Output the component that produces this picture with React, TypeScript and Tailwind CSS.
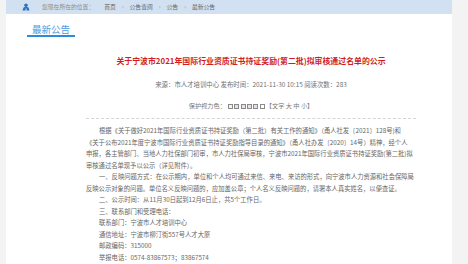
const FONT = { fontFamily: '"Noto Sans CJK SC", "Noto Sans", sans-serif' };

const swatches = ["#fbf7c8", "#cfe6fb", "#f6dede", "#e4e4e4", "#e9dcf6", "#ffffff"];

const body: { text: string; indent?: boolean }[] = [
  { text: "根据《关于做好2021年国际行业资质证书持证奖励（第二批）有关工作的通知》（甬人社发〔2021〕128号)和", indent: true },
  { text: "《关于公布2021年度宁波市国际行业资质证书持证奖励指导目录的通知》（甬人社办发〔2020〕14号）精神，经个人" },
  { text: "申报，各主管部门、当地人力社保部门初审，市人力社保局审核，宁波市2021年国际行业资质证书持证奖励(第二批)拟" },
  { text: "审核通过名单现予以公示（详见附件）。" },
  { text: "一、反映问题方式：在公示期内，单位和个人均可通过来信、来电、来访的形式，向宁波市人力资源和社会保障局", indent: true },
  { text: "反映公示对象的问题。单位名义反映问题的，应加盖公章；个人名义反映问题的，请署本人真实姓名，以便查证。" },
  { text: "二、公示时间：从11月30日起到12月6日止，共5个工作日。", indent: true },
  { text: "三、联系部门和受理电话：", indent: true },
  { text: "联系部门：宁波市人才培训中心", indent: true },
  { text: "通信地址：宁波市柳汀街557号人才大厦", indent: true },
  { text: "邮政编码：315000", indent: true },
  { text: "举报电话：0574-83867573；83867574", indent: true },
];

function Crumb({ children }: { children: React.ReactNode }) {
  return <span className="text-[#666]">{children}</span>;
}

function Sep() {
  return <span className="mx-[6px] text-[#999]">›</span>;
}

export default function App() {
  return (
    <div className="h-[264px] w-[468px] overflow-hidden bg-[#f3f3f3]" style={FONT}>
      <div className="ml-[6px] h-full w-[446px] bg-white">
        {/* 位置栏 */}
        <div className="flex h-[14px] items-center bg-[#d2e1f1] pl-[16px] text-[5.8px] leading-none">
          <svg width="8" height="8" viewBox="0 0 16 16" className="mr-[12px]">
            <circle cx="8" cy="4.5" r="3.5" fill="#2c6fbf" />
            <path d="M1 15 L3 9 Q8 6 13 9 L15 15 Z" fill="#2c6fbf" />
            <path d="M8 9 L9.3 15 L6.7 15 Z" fill="#fff" />
          </svg>
          <span className="text-[#8a8a8a]">您现在所在的位置：</span>
          <span className="ml-[10px]" />
          <Crumb>首页</Crumb>
          <Sep />
          <Crumb>公告查阅</Crumb>
          <Sep />
          <Crumb>公告</Crumb>
          <Sep />
          <Crumb>最新公告</Crumb>
        </div>

        {/* 栏目标题 */}
        <div className="ml-[21px] mt-[5px] inline-block border-b-2 border-[#2b8ad9] px-[5px] text-[9.5px] leading-[12px] text-[#4b9de0]">
          最新公告
        </div>

        {/* 正文区 */}
        <div className="ml-[80px] w-[330px]">
          <h1 className="mt-[17px] whitespace-nowrap text-center text-[7.9px] font-bold leading-[12px] text-[#cf1f25]">
            关于宁波市2021年国际行业资质证书持证奖励(第二批)拟审核通过名单的公示
          </h1>
          <div className="mt-[13px] text-center text-[6.4px] leading-[10px] text-[#707070]">
            来源：市人才培训中心 发布时间：2021-11-30 10:15 阅读次数：283
          </div>
          <div className="mt-[11px] flex items-center justify-center text-[6.2px] leading-[10px] text-[#777]">
            <span>保护视力色：</span>
            <span className="ml-[2px] flex gap-[1.4px]">
              {swatches.map((c) => (
                <span key={c} className="h-[5px] w-[5px] border border-[#8a8a8a]" style={{ background: c }} />
              ))}
            </span>
            <span className="ml-[1px]">【文字 大 中 小】</span>
          </div>
          <div className="mt-[7px] border-t border-dashed border-[#d4d4d4]" />
          <div className="mt-[6px] text-[6.3px] leading-[11.5px] text-[#666]">
            {body.map((l, i) => (
              <div key={i} className={`whitespace-nowrap ${l.indent ? "pl-[13px]" : ""}`}>
                {l.text}
              </div>
            ))}
          </div>
        </div>
      </div>
    </div>
  );
}
